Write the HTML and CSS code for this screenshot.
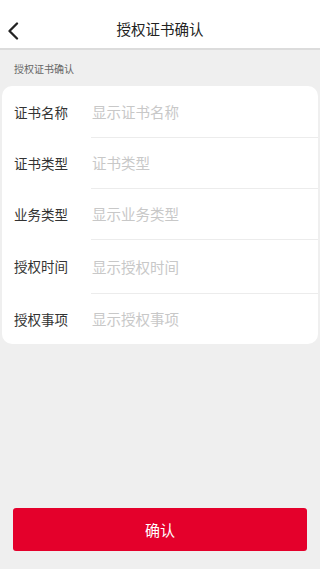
FILE: index.html
```html
<!DOCTYPE html>
<html lang="zh">
<head>
<meta charset="utf-8">
<meta name="viewport" content="width=device-width, initial-scale=1">
<link rel="stylesheet" href="styles.css">
</head>
<body>
<div class="page">
  <header class="topbar">
    <span class="back">
      <svg width="12" height="18" viewBox="0 0 12 18"><path d="M10 1.5 L2.5 9 L10 16.5" fill="none" stroke="#222" stroke-width="2.3" stroke-linecap="round" stroke-linejoin="round"/></svg>
    </span>
    <h1 class="title">授权证书确认</h1>
  </header>
  <div class="section-title">授权证书确认</div>
  <div class="card">
    <div class="row"><span class="label">证书名称</span><span class="value">显示证书名称</span></div>
    <div class="row"><span class="label">证书类型</span><span class="value">证书类型</span></div>
    <div class="row"><span class="label">业务类型</span><span class="value">显示业务类型</span></div>
    <div class="row tall"><span class="label">授权时间</span><span class="value">显示授权时间</span></div>
    <div class="row"><span class="label">授权事项</span><span class="value">显示授权事项</span></div>
  </div>
  <div class="spacer"></div>
  <div class="footer">
    <button class="confirm">确认</button>
  </div>
</div>
</body>
</html>
```
FILE: styles.css
```css
* { box-sizing: border-box; margin: 0; padding: 0; }
html, body { width: 320px; height: 569px; }
body {
  background: #efefef;
  font-family: "Noto Sans CJK SC", "Noto Sans", sans-serif;
  color: #333;
}
.page { display: flex; flex-direction: column; height: 569px; }
.topbar {
  height: 50px;
  background: #fff;
  border-bottom: 2px solid #dcdcdc;
  display: flex;
  align-items: center;
  justify-content: center;
  position: relative;
}
.back { position: absolute; left: 7px; top: 22px; display: flex; }
.title { font-size: 14.5px; font-weight: normal; color: #222; line-height: 1; margin-top: 11px; }
.section-title {
  font-size: 10px;
  color: #666;
  padding: 11px 0 0 14px;
  height: 36px;
}
.card {
  margin: 0 2px;
  background: #fff;
  border-radius: 10px;
  overflow: hidden;
}
.row {
  height: 51px;
  display: flex;
  align-items: center;
  position: relative;
}
.row.tall { height: 54px; }
.row + .row::before {
  content: "";
  position: absolute;
  left: 89px;
  right: 0;
  top: 0;
  border-top: 1px solid #ececec;
}
.label { width: 90px; padding-left: 12px; font-size: 13.5px; color: #333; }
.value { font-size: 14.5px; color: #c8c8c8; }
.spacer { flex: 1; }
.footer { padding: 0 13px 18px; }
.confirm {
  width: 100%;
  height: 43px;
  background: #e4002b;
  border: none;
  border-radius: 3px;
  color: #fff;
  font-size: 15px;
  font-family: "Noto Sans CJK SC", sans-serif;
}
```
